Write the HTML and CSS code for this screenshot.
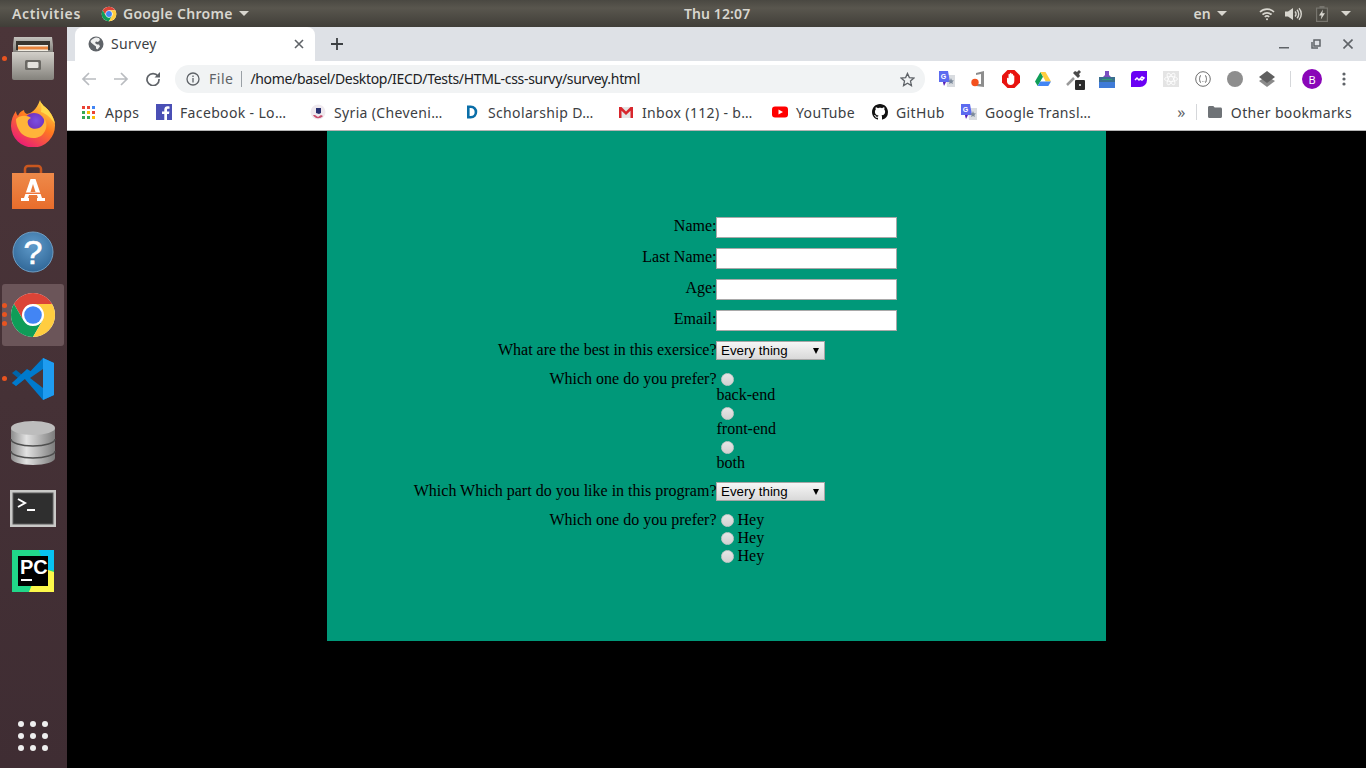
FILE: index.html
```html
<!DOCTYPE html>
<html lang="en">
<head>
  <meta charset="UTF-8" />
  <title>Survey</title>
  <link rel="stylesheet" href="styles.css">
</head>
<body>
  <svg class="defs" width="0" height="0">
    <symbol id="chrome-logo" viewBox="0 0 48 48">
      <circle cx="24" cy="24" r="22" fill="#fff"/>
      <path fill="#db4437" d="M43.05 13A22 22 0 0 0 4.95 13L14.47 29.5A11 11 0 0 1 24 13Z"/>
      <path fill="#0f9d58" d="M4.95 13A22 22 0 0 0 24 46L33.53 29.5A11 11 0 0 1 14.47 29.5Z"/>
      <path fill="#ffcd40" d="M24 46A22 22 0 0 0 43.05 13H24A11 11 0 0 1 33.53 29.5Z"/>
      <circle cx="24" cy="24" r="8.8" fill="#4285f4"/>
    </symbol>
  </svg>

  <header class="topbar">
    <div class="topbar-left">
      <span class="activities">Activities</span>
      <svg class="top-chrome" width="16" height="16"><use href="#chrome-logo"/></svg>
      <span class="app-name">Google Chrome</span>
      <span class="caret"></span>
    </div>
    <div class="clock">Thu 12:07</div>
    <div class="topbar-right">
      <span class="lang">en</span>
      <span class="caret"></span>
      <svg class="tray-wifi" width="16" height="14" viewBox="0 0 16 14" fill="none" stroke="#d8d6cf" stroke-width="1.700">
        <path d="M1 5a10 10 0 0 1 14 0"/>
        <path d="M3.500 7.600a6.500 6.500 0 0 1 9 0"/>
        <path d="M5.800 10a3.200 3.200 0 0 1 4.400 0"/>
        <circle cx="8" cy="12.300" r="1" fill="#d8d6cf" stroke="none"/>
      </svg>
      <svg class="tray-sound" width="17" height="14" viewBox="0 0 17 14" fill="none" stroke="#d8d6cf" stroke-width="1.400">
        <path d="M0 4.500h3L8 1v12L3 9.500H0z" fill="#d8d6cf" stroke="none"/>
        <path d="M10 4.500a3.500 3.500 0 0 1 0 5"/>
        <path d="M12 2.800a6 6 0 0 1 0 8.400"/>
        <path d="M14 1.200a8.500 8.500 0 0 1 0 11.600"/>
      </svg>
      <svg class="tray-battery" width="12" height="16" viewBox="0 0 12 16">
        <path fill="#77756e" d="M3.500 0h5v1.500H12V16H0V1.500h3.500z"/>
        <path fill="#4c4a43" d="M1.200 2.700h9.600v12.100H1.200z"/>
        <path fill="#d8d6cf" d="M7 3.500L3 9.500h2.500L4.800 13.500 9 7.200H6.300z"/>
      </svg>
      <span class="caret caret-last"></span>
    </div>
  </header>

  <div class="desktop">
    <nav class="dock">
      <div class="dock-item">
        <span class="dot dot-mid"></span>
        <svg width="48" height="48" viewBox="0 0 48 48">
          <defs>
            <linearGradient id="cab" x1="0" y1="0" x2="0" y2="1"><stop offset="0" stop-color="#d2cfc9"/><stop offset="1" stop-color="#84827c"/></linearGradient>
            <linearGradient id="cabtop" x1="0" y1="0" x2="0" y2="1"><stop offset="0" stop-color="#c4c2bd"/><stop offset="1" stop-color="#7d7b76"/></linearGradient>
          </defs>
          <path fill="url(#cabtop)" d="M5 2h38l1 8v8H4v-8z"/>
          <path fill="#38352f" d="M7 6h34v9H7z"/>
          <path fill="#f0ece2" d="M9 10h30v6H9z"/>
          <path fill="#e8853d" d="M9 11.500h30v3H9z"/>
          <path fill="url(#cab)" d="M3 17h42v26a2 2 0 0 1-2 2H5a2 2 0 0 1-2-2z"/>
          <rect x="16" y="25" width="16" height="10" rx="1.500" fill="#6a6863"/>
          <rect x="18.500" y="27" width="11" height="6" rx="1" fill="#e4e2dd"/>
        </svg>
      </div>
      <div class="dock-item">
        <svg width="48" height="48" viewBox="0 0 48 48">
          <defs>
            <linearGradient id="fox" x1="0.800" y1="0" x2="0.200" y2="1"><stop offset="0" stop-color="#ffe14a"/><stop offset="0.450" stop-color="#ff7a1f"/><stop offset="1" stop-color="#e8127f"/></linearGradient>
            <radialGradient id="foxball" cx="0.600" cy="0.350" r="0.700"><stop offset="0" stop-color="#7b4fe0"/><stop offset="1" stop-color="#6a1fa8"/></radialGradient>
          </defs>
          <path fill="url(#fox)" d="M31 1c1 5 6 7 9 11 4 5 6 10 6 14a22 22 0 0 1-44 1c0-6 2-11 5-15 0 2 1 4 2 5 1-3 3-5 6-6 0 2 1 3 3 4 4-1 9-3 13-14z"/>
          <circle cx="25" cy="25" r="11" fill="url(#foxball)"/>
          <path fill="#ffb43a" d="M7 20c4-4 11-4 15-1-3 1-4 3-3 6 1 4 6 6 11 4 4-2 6-6 5-10 4 5 3 13-3 18-5 3-13 3-19-2-4-4-6-10-6-15z"/>
          <path fill="#ffd84a" d="M31 1c1 5 6 7 9 11 3 4 5 8 6 13-4-6-8-10-14-12 1-4 0-8-1-12z"/>
        </svg>
      </div>
      <div class="dock-item">
        <svg width="48" height="48" viewBox="0 0 48 48">
          <defs>
            <linearGradient id="bag" x1="0" y1="0" x2="0" y2="1"><stop offset="0" stop-color="#ee8a4a"/><stop offset="1" stop-color="#e86d2c"/></linearGradient>
          </defs>
          <path fill="none" stroke="#c9571f" stroke-width="2.500" d="M16 16V6a3 3 0 0 1 3-3h10a3 3 0 0 1 3 3v10"/>
          <path fill="url(#bag)" d="M3 10h42v36H3z"/>
          <path fill="#fff" d="M21.500 16h5l6.500 19h3v3H28v-3h1l-1-3H20l-1 3h1v3H12v-3h3zM24 21l-2.500 8h5z"/>
          <path fill="#f0763a" d="M16 29.500h16v1.500H16z"/>
        </svg>
      </div>
      <div class="dock-item">
        <svg width="48" height="48" viewBox="0 0 48 48">
          <defs>
            <radialGradient id="help" cx="0.500" cy="0.350" r="0.700"><stop offset="0" stop-color="#5f9bcb"/><stop offset="1" stop-color="#2e6494"/></radialGradient>
          </defs>
          <circle cx="24" cy="25" r="20" fill="url(#help)" stroke="#6f9dc2"/>
          <text x="24" y="37" class="svg-help">?</text>
        </svg>
      </div>
      <div class="dock-item dock-active">
        <span class="dot dot-a"></span><span class="dot dot-b"></span><span class="dot dot-c"></span>
        <svg width="48" height="48"><use href="#chrome-logo"/></svg>
      </div>
      <div class="dock-item">
        <span class="dot dot-mid"></span>
        <svg width="48" height="48" viewBox="0 0 48 48">
          <path fill="#0065a9" d="M3 18l4-3 10 8-10 8-4-3 6-5z"/>
          <path fill="#007acc" d="M34 3L15 23l19 22 11-5V8z"/>
          <path fill="#1f9cf0" d="M34 3l11 5v32l-11 5z"/>
          <path fill="#4a3538" d="M34 14v19l-13-10z"/>
          <path fill="#007acc" d="M3 28l4 3 10-8 6-6-5-3z"/>
        </svg>
      </div>
      <div class="dock-item">
        <svg width="48" height="48" viewBox="0 0 48 48">
          <defs>
            <linearGradient id="db" x1="0" y1="0" x2="1" y2="0"><stop offset="0" stop-color="#8c8c8c"/><stop offset="0.350" stop-color="#e2e2e2"/><stop offset="1" stop-color="#7c7c7c"/></linearGradient>
          </defs>
          <path fill="url(#db)" d="M2 9v30c0 4 10 7 22 7s22-3 22-7V9z"/>
          <ellipse cx="24" cy="9" rx="22" ry="7" fill="#bdbdbd"/>
          <path fill="none" stroke="#4f4f4f" stroke-width="1.500" d="M2 20c0 4 10 7 22 7s22-3 22-7M2 32c0 4 10 7 22 7s22-3 22-7"/>
        </svg>
      </div>
      <div class="dock-item">
        <svg width="48" height="48" viewBox="0 0 48 48">
          <rect x="1" y="7" width="46" height="37" fill="#c9c9c7"/>
          <rect x="4" y="10" width="40" height="31" fill="#2f2f2f" stroke="#5c5c5c"/>
          <path fill="none" stroke="#fff" stroke-width="2" d="M9 16l7 4-7 4"/>
          <path fill="#fff" d="M18 26h8v2h-8z"/>
        </svg>
      </div>
      <div class="dock-item">
        <svg width="48" height="48" viewBox="0 0 48 48">
          <path fill="#21d789" d="M3 3h42v42H3z"/>
          <path fill="#fcf84a" d="M30 20l15 5v20H20z"/>
          <path fill="#07c3f2" d="M30 3h15v20l-9 0z"/>
          <path fill="#000" d="M9 9h30v30H9z"/>
          <text x="11" y="27" class="svg-pc">PC</text>
          <path fill="#fff" d="M12 32h11v2H12z"/>
        </svg>
      </div>
      <div class="dock-item dock-apps">
        <svg width="32" height="32" viewBox="0 0 32 32" fill="#eeeeee">
          <circle cx="4" cy="4" r="3"/><circle cx="16" cy="4" r="3"/><circle cx="28" cy="4" r="3"/>
          <circle cx="4" cy="16" r="3"/><circle cx="16" cy="16" r="3"/><circle cx="28" cy="16" r="3"/>
          <circle cx="4" cy="28" r="3"/><circle cx="16" cy="28" r="3"/><circle cx="28" cy="28" r="3"/>
        </svg>
      </div>
    </nav>

    <div class="browser">
      <div class="tabstrip">
        <div class="tab">
          <svg width="16" height="16" viewBox="0 0 16 16">
            <circle cx="8" cy="8" r="7.500" fill="#5f6368"/>
            <path fill="#fff" d="M8 1.500l3 .5 1 2-2 2-2-.5-1 1.500 2 1.500 2 0 1 2-2.500 3-1.500-1v-2L6 9 3 6.500 2.500 5C4 3 6 2 8 1.500z" opacity="0.900"/>
          </svg>
          <span class="tab-title">Survey</span>
          <svg class="tab-close" width="10" height="10" viewBox="0 0 10 10" stroke="#5f6368" stroke-width="1.600"><path d="M1 1l8 8M9 1l-8 8"/></svg>
        </div>
        <svg class="new-tab" width="12" height="12" viewBox="0 0 12 12" stroke="#3c4043" stroke-width="1.800"><path d="M6 0v12M0 6h12"/></svg>
        <div class="window-btns">
          <svg width="10" height="10" viewBox="0 0 10 10"><path fill="#5f6368" d="M0 8h10v1.500H0z"/></svg>
          <svg width="10" height="10" viewBox="0 0 10 10" fill="none" stroke="#5f6368" stroke-width="1.500"><path d="M3 1h6v6H3z"/><path d="M1 3v6h6" stroke-width="1.500"/></svg>
          <svg width="10" height="10" viewBox="0 0 10 10" stroke="#5f6368" stroke-width="1.600"><path d="M.5.500l9 9M9.500.500l-9 9"/></svg>
        </div>
      </div>

      <div class="toolbar">
        <svg class="nav-back" width="16" height="14" viewBox="0 0 16 14" fill="none" stroke="#b9bcc0" stroke-width="1.700"><path d="M15 7H2M8 1L2 7l6 6"/></svg>
        <svg class="nav-forward" width="16" height="14" viewBox="0 0 16 14" fill="none" stroke="#b9bcc0" stroke-width="1.700"><path d="M1 7h13M8 1l6 6-6 6"/></svg>
        <svg class="nav-reload" width="14" height="14" viewBox="0 0 14 14" fill="none" stroke="#5f6368" stroke-width="1.700"><path d="M12 4.200A6 6 0 1 0 13 7"/><path fill="#5f6368" stroke="none" d="M14 0v5.500H8.500z"/></svg>
        <div class="omnibox">
          <svg width="14" height="14" viewBox="0 0 14 14" fill="none" stroke="#5f6368" stroke-width="1.300"><circle cx="7" cy="7" r="6"/><path d="M7 6v4.500M7 3.500v1.500"/></svg>
          <span class="omni-file">File</span>
          <span class="omni-sep"></span>
          <span class="omni-url">/home/basel/Desktop/IECD/Tests/HTML-css-survy/survey.html</span>
          <svg class="omni-star" width="15" height="15" viewBox="0 0 16 16" fill="none" stroke="#5f6368" stroke-width="1.400"><path d="M8 1.500l2 4.500 4.800.5-3.600 3.200 1 4.800L8 12l-4.200 2.500 1-4.800L1.200 6.500 6 6z"/></svg>
        </div>
        <div class="extensions">
          <span class="ext">
            <svg width="16" height="16" viewBox="0 0 16 16">
              <path fill="#d9dce0" d="M7 4h9v12H8z"/>
              <path fill="#5c6bf0" d="M0 0h9l2 11H6l-1 3-1-3H0z"/>
              <path fill="#5b21b6" d="M4 11h3l-2 4z"/>
              <text x="4.600" y="8" class="svg-g">G</text>
              <path fill="#7c8a9c" d="M12 7l.9 2.200 2.100.2-1.600 1.500.5 2.200-1.900-1.200-1.900 1.200.5-2.200L9 9.400l2.100-.2z"/>
            </svg>
          </span>
          <span class="ext">
            <svg width="16" height="16" viewBox="0 0 16 16">
              <path fill="#8d8d8d" d="M5 2l8-2v16l-8-1v-2h5V3L5 4z"/>
              <circle cx="4" cy="11.500" r="3.700" fill="#f4511e"/>
            </svg>
          </span>
          <span class="ext">
            <svg width="18" height="18" viewBox="0 0 18 18">
              <path fill="#e8130f" d="M5.500 0h7L18 5.500v7L12.500 18h-7L0 12.500v-7z"/>
              <path fill="#fff" d="M5 8.500c0-1 1.300-1 1.500 0V4.500c0-1 1.300-1 1.500 0V3.500c0-1 1.500-1 1.500 0v1c0-1 1.500-1 1.500 0v1.500c0-1 1.300-1 1.300 0V11c0 2.500-1.500 4-3.800 4-2 0-3-1-3.500-3z"/>
            </svg>
          </span>
          <span class="ext">
            <svg width="16" height="15" viewBox="0 0 16 15">
              <path fill="#0f9d58" d="M5.500 0L0 9.500 2.700 14 8 4.800z"/>
              <path fill="#ffcd40" d="M5.500 0h5L16 9.500h-5.300z"/>
              <path fill="#4285f4" d="M2.700 14H13.300L16 9.500H5.300z"/>
            </svg>
          </span>
          <span class="ext ext-dropper">
            <svg width="20" height="22" viewBox="0 0 20 22">
              <path fill="none" stroke="#9a9a9a" stroke-width="2.500" d="M2 17l7-7"/>
              <path fill="#4a4a4a" d="M8 5l2-2 2 1 2-2 2 2-2 2 1 2-2 2z"/>
              <rect x="10" y="12" width="10" height="10" rx="1" fill="#2b2b2b"/>
              <circle cx="15" cy="17" r="1" fill="#fff"/>
            </svg>
          </span>
          <span class="ext">
            <svg width="16" height="17" viewBox="0 0 16 17">
              <path fill="#7a4fc0" d="M6 0h4v4l2 2H4l2-2z"/>
              <path fill="#3a6f8f" d="M0 6h16v5H0z"/>
              <path fill="#2f9e77" d="M3 8h10v1H3z"/>
              <path fill="#3f7bd8" d="M0 11h16v6H0z"/>
            </svg>
          </span>
          <span class="ext">
            <svg width="16" height="16" viewBox="0 0 16 16">
              <path fill="#6a00f4" d="M4 0h12v9a7 7 0 0 1-7 7H0V4a4 4 0 0 1 4-4z"/>
              <path fill="none" stroke="#fff" stroke-width="1.500" d="M4 9l2-2 2 2 3-3 2 1-2 2-2-1"/>
            </svg>
          </span>
          <span class="ext">
            <svg width="16" height="16" viewBox="0 0 16 16" fill="none" stroke="#fff" stroke-width="0.800">
              <rect width="16" height="16" fill="#e4e4e4" stroke="none"/>
              <ellipse cx="8" cy="8" rx="6.500" ry="2.500"/>
              <ellipse cx="8" cy="8" rx="6.500" ry="2.500" transform="rotate(60 8 8)"/>
              <ellipse cx="8" cy="8" rx="6.500" ry="2.500" transform="rotate(120 8 8)"/>
            </svg>
          </span>
          <span class="ext">
            <svg width="16" height="16" viewBox="0 0 16 16" fill="none" stroke="#6d6d6d" stroke-width="1">
              <circle cx="8" cy="8" r="7.300"/>
              <path d="M6 4.500c-2 0-.5 3.500-2 3.500 1.500 0 0 3.500 2 3.500M10 4.500c2 0 .5 3.500 2 3.500-1.500 0 0 3.500-2 3.500M7 10.500h.5M8.700 10.500h.5"/>
            </svg>
          </span>
          <span class="ext"><span class="ext-ball"></span></span>
          <span class="ext">
            <svg width="16" height="16" viewBox="0 0 16 16">
              <path fill="#8a8a8a" d="M8 5l8 5-8 6-8-6z"/>
              <path fill="#5f5f5f" d="M8 0l8 6-8 6-8-6z"/>
            </svg>
          </span>
        </div>
        <span class="tool-sep"></span>
        <span class="avatar">B</span>
        <svg class="menu-dots" width="4" height="14" viewBox="0 0 4 14" fill="#5f6368"><circle cx="2" cy="2" r="1.600"/><circle cx="2" cy="7" r="1.600"/><circle cx="2" cy="12" r="1.600"/></svg>
      </div>

      <div class="bookmarks">
        <span class="bm bm-apps">
          <svg class="apps-icon" width="13" height="13" viewBox="0 0 13 13">
            <rect width="3" height="3" fill="#ea4335"/><rect x="5" width="3" height="3" fill="#ea4335"/><rect x="10" width="3" height="3" fill="#4285f4"/>
            <rect y="5" width="3" height="3" fill="#34a853"/><rect x="5" y="5" width="3" height="3" fill="#fbbc05"/><rect x="10" y="5" width="3" height="3" fill="#ea4335"/>
            <rect y="10" width="3" height="3" fill="#34a853"/><rect x="5" y="10" width="3" height="3" fill="#34a853"/><rect x="10" y="10" width="3" height="3" fill="#fbbc05"/>
          </svg>
          Apps
        </span>
        <span class="bm bm-wide">
          <svg width="16" height="16" viewBox="0 0 16 16"><rect width="16" height="16" fill="#4a4fb5"/><path fill="#fff" d="M11 16V10h2l.4-2.500H11V6c0-.8.300-1.200 1.200-1.200h1.300V2.500c-.6-.1-1.300-.2-2-.2C9.600 2.300 8.300 3.500 8.300 5.600v1.900H6V10h2.300v6z"/></svg>
          Facebook - Lo…
        </span>
        <span class="bm bm-wide">
          <svg width="16" height="16" viewBox="0 0 16 16"><circle cx="8" cy="8" r="7.500" fill="#efe9ee"/><path fill="#c9506f" d="M3 11a6 6 0 0 0 10 1l-2-1-3 2-3-2z"/><path fill="#27306e" d="M6 4h5v5l-2 1-3-1z"/></svg>
          Syria (Cheveni…
        </span>
        <span class="bm bm-wide">
          <svg width="16" height="16" viewBox="0 0 16 16"><path fill="none" stroke="#0a6ea8" stroke-width="2.600" d="M4.300 2.800v10.400h2.400c7 0 7-10.400 0-10.400z"/></svg>
          Scholarship D…
        </span>
        <span class="bm bm-wide">
          <svg width="16" height="16" viewBox="0 0 16 16"><path fill="#e4e4e4" d="M1 3h14v11H1z"/><path fill="#d8262c" d="M1 3h2.500L8 7.500 12.500 3H15v11h-2.500V6.800L8 11 3.500 6.800V14H1z"/></svg>
          Inbox (112) - b…
        </span>
        <span class="bm bm-yt">
          <svg width="16" height="16" viewBox="0 0 16 16"><rect y="2.500" width="16" height="11" rx="3" fill="#ff0000"/><path fill="#fff" d="M6.500 5.500L11 8l-4.500 2.500z"/></svg>
          YouTube
        </span>
        <span class="bm bm-gh">
          <svg width="16" height="16" viewBox="0 0 16 16"><path fill="#111" d="M8 0C3.580 0 0 3.580 0 8c0 3.540 2.290 6.530 5.470 7.590.4.070.55-.17.55-.38 0-.19-.01-.82-.01-1.490-2.010.37-2.530-.49-2.690-.94-.09-.23-.48-.94-.82-1.130-.28-.15-.68-.52-.01-.53.63-.01 1.080.58 1.230.82.72 1.210 1.870.87 2.330.66.070-.52.280-.87.510-1.070-1.780-.2-3.640-.89-3.640-3.950 0-.87.310-1.590.82-2.150-.08-.2-.36-1.020.08-2.120 0 0 .67-.21 2.200.82.640-.18 1.320-.27 2-.27s1.360.09 2 .27c1.530-1.040 2.200-.82 2.200-.82.44 1.100.16 1.920.08 2.120.51.56.82 1.270.82 2.150 0 3.070-1.870 3.750-3.650 3.950.29.25.54.73.54 1.480 0 1.070-.01 1.930-.01 2.200 0 .21.150.46.550.38A8.013 8.013 0 0 0 16 8c0-4.420-3.580-8-8-8z"/></svg>
          GitHub
        </span>
        <span class="bm bm-wide">
          <svg width="16" height="16" viewBox="0 0 16 16">
            <path fill="#d9dce0" d="M7 4h9v12H8z"/>
            <path fill="#5c6bf0" d="M0 0h9l2 11H6l-1 3-1-3H0z"/>
            <path fill="#5b21b6" d="M4 11h3l-2 4z"/>
            <text x="4.600" y="8" class="svg-g">G</text>
            <path fill="#7c8a9c" d="M12 7l.9 2.200 2.100.2-1.600 1.500.5 2.200-1.900-1.200-1.900 1.200.5-2.200L9 9.400l2.100-.2z"/>
          </svg>
          Google Transl…
        </span>
        <span class="bm-more">»</span>
        <span class="bm-sep"></span>
        <span class="bm bm-other">
          <svg width="14" height="12" viewBox="0 0 14 12"><path fill="#6f7377" d="M0 1.500C0 .7.600 0 1.400 0h3.900l1.400 1.500h5.900c.8 0 1.400.7 1.400 1.500v7.500c0 .8-.6 1.500-1.400 1.500H1.400C.6 12 0 11.300 0 10.500z"/></svg>
          Other bookmarks
        </span>
      </div>

      <main class="page">
        <form class="survey">
          <label class="q">Name:</label>
          <div><input type="text" class="field"></div>

          <label class="q">Last Name:</label>
          <div><input type="text" class="field"></div>

          <label class="q">Age:</label>
          <div><input type="text" class="field"></div>

          <label class="q">Email:</label>
          <div><input type="email" class="field"></div>

          <label class="q">What are the best in this exersice?</label>
          <div><span class="select-wrap"><select class="pick"><option>Every thing</option></select></span></div>

          <label class="q">Which one do you prefer?</label>
          <div>
            <input type="radio" name="side" class="radio">
            <label class="choice">back-end</label>
            <input type="radio" name="side" class="radio">
            <label class="choice">front-end</label>
            <input type="radio" name="side" class="radio">
            <label class="choice">both</label>
          </div>

          <label class="q">Which Which part do you like in this program?</label>
          <div><span class="select-wrap"><select class="pick"><option>Every thing</option></select></span></div>

          <label class="q">Which one do you prefer?</label>
          <div>
            <div class="hey"><input type="radio" name="hey" class="radio"><label>Hey</label></div>
            <div class="hey"><input type="radio" name="hey" class="radio"><label>Hey</label></div>
            <div class="hey"><input type="radio" name="hey" class="radio"><label>Hey</label></div>
          </div>
        </form>
      </main>
    </div>
  </div>
</body>
</html>
```

FILE: styles.css
```css
* {
  box-sizing: border-box;
}
html, body {
  margin: 0;
  height: 768px;
  overflow: hidden;
}
body {
  background: #000;
  font-family: "Noto Sans", sans-serif;
}
.defs {
  position: absolute;
}
.svg-g {
  font: bold 7px "Liberation Sans", sans-serif;
  fill: #fff;
  text-anchor: middle;
}
.svg-help {
  font: 34px "Liberation Sans", sans-serif;
  stroke: #fff;
  stroke-width: 0.6px;
  fill: #fff;
  text-anchor: middle;
}
.svg-pc {
  font: bold 20px "Liberation Sans", sans-serif;
  fill: #fff;
}

/* top bar */
.topbar {
  height: 27px;
  display: flex;
  align-items: center;
  justify-content: space-between;
  position: relative;
  background: linear-gradient(#4a4842, #59564e 30%, #403e38);
  color: #d8d6cf;
  font-size: 14px;
  font-weight: 600;
}
.topbar-left, .topbar-right {
  display: flex;
  align-items: center;
}
.activities {
  margin-left: 12px;
  letter-spacing: 0.65px;
}
.top-chrome {
  margin-left: 20px;
}
.app-name {
  margin-left: 6px;
  letter-spacing: 0.3px;
}
.caret {
  display: inline-block;
  margin-left: 6px;
  border-left: 5px solid transparent;
  border-right: 5px solid transparent;
  border-top: 5px solid #d8d6cf;
}
.clock {
  position: absolute;
  left: 684px;
  letter-spacing: 0.1px;
}
.lang {
  letter-spacing: 0.2px;
}
.tray-wifi {
  margin-left: 32px;
}
.tray-sound {
  margin-left: 10px;
}
.tray-battery {
  margin-left: 14px;
}
.caret-last {
  margin-left: 13px;
  margin-right: 15px;
}

.desktop {
  display: flex;
  height: 741px;
}

/* dock */
.dock {
  width: 67px;
  flex: none;
  display: flex;
  flex-direction: column;
  background: linear-gradient(#4b3539, #3f2d33);
}
.dock-item {
  height: 64px;
  flex: none;
  display: flex;
  align-items: center;
  justify-content: center;
  padding-right: 1px;
  position: relative;
}
.dock-active::before {
  content: "";
  position: absolute;
  left: 2px;
  right: 3px;
  top: 1px;
  bottom: 1px;
  background: #6b5559;
  border-radius: 3px;
}
.dock-item svg {
  position: relative;
}
.dock-apps {
  margin-top: auto;
}
.dot {
  position: absolute;
  left: 2px;
  width: 5px;
  height: 5px;
  border-radius: 50%;
  background: #e95420;
  z-index: 1;
}
.dot-mid, .dot-b {
  top: 29px;
}
.dot-a {
  top: 20px;
}
.dot-c {
  top: 38px;
}

/* browser */
.browser {
  flex: 1;
  min-width: 0;
  display: flex;
  flex-direction: column;
}
.tabstrip {
  height: 34px;
  flex: none;
  display: flex;
  align-items: center;
  background: #dee1e6;
  padding-left: 8px;
}
.tab {
  width: 240px;
  height: 34px;
  background: #fff;
  border-radius: 8px 8px 0 0;
  display: flex;
  align-items: center;
  padding-left: 13px;
  font-size: 14px;
  color: #3c4043;
}
.tab-title {
  margin-left: 7px;
  margin-bottom: 2px;
  letter-spacing: 0.3px;
}
.tab-close {
  margin-left: auto;
  margin-right: 11px;
}
.new-tab {
  margin-left: 16px;
}
.window-btns {
  margin-left: auto;
  display: flex;
  gap: 22px;
  padding-right: 13px;
}
.toolbar {
  height: 36px;
  flex: none;
  display: flex;
  align-items: center;
  background: #fff;
  padding-left: 14px;
}
.nav-forward {
  margin-left: 16px;
}
.nav-reload {
  margin-left: 17px;
}
.omnibox {
  width: 750px;
  height: 28px;
  margin-left: 15px;
  border-radius: 14px;
  background: #f1f3f4;
  display: flex;
  align-items: center;
  padding: 0 10px 0 11px;
  font-size: 14px;
}
.omni-file {
  margin-left: 9px;
  margin-bottom: 2px;
  color: #5f6368;
  letter-spacing: 0.5px;
}
.omni-sep {
  width: 1px;
  height: 16px;
  background: #9aa0a6;
  margin: 0 8px;
}
.omni-url {
  margin-bottom: 2px;
  color: #202124;
  letter-spacing: -0.32px;
}
.omni-star {
  margin-left: auto;
}
.extensions {
  display: flex;
  margin-left: 6px;
}
.ext {
  width: 32px;
  height: 28px;
  display: flex;
  align-items: center;
  justify-content: center;
}
.ext-ball {
  width: 16px;
  height: 16px;
  border-radius: 50%;
  background: #8e8e8e;
}
.tool-sep {
  width: 1px;
  height: 16px;
  background: #d5d7da;
  margin-left: 7px;
}
.avatar {
  width: 20px;
  height: 20px;
  margin-left: 11px;
  border-radius: 50%;
  background: #8a06b8;
  color: #fff;
  font-size: 11px;
  display: flex;
  align-items: center;
  justify-content: center;
}
.menu-dots {
  margin-left: 20px;
}

/* bookmarks */
.bookmarks {
  height: 34px;
  flex: none;
  display: flex;
  align-items: center;
  background: #fff;
  border-bottom: 1px solid #b5b5b5;
  padding: 0 14px 3px 15px;
  font-size: 14px;
  letter-spacing: 0.35px;
  color: #3c4043;
}
.bm {
  display: flex;
  align-items: center;
  gap: 8px;
  white-space: nowrap;
}
.bm-apps {
  width: 74px;
  gap: 10px;
}
.bm-wide {
  width: 154px;
}
.bm-yt {
  width: 100px;
}
.bm-gh {
  width: 89px;
}
.bm-more {
  margin-left: auto;
  font-size: 16px;
  color: #5f6368;
}
.bm-sep {
  width: 1px;
  height: 16px;
  background: #d5d7da;
  margin-left: 10px;
}
.bm-other {
  margin-left: 11px;
  gap: 9px;
}

/* the page itself */
.page {
  flex: 1;
  background: #000;
}
.survey {
  width: 779px;
  height: 510px;
  margin: 0 auto;
  background: #009879;
  padding-top: 86px;
  display: grid;
  grid-template-columns: 389px 1fr;
  grid-auto-rows: min-content;
  row-gap: 10px;
  font-family: "Liberation Serif", serif;
  font-size: 16px;
  line-height: 18px;
  color: #000;
}
.q {
  margin-right: -0.5px;
  text-align: right;
  white-space: nowrap;
}
.field {
  display: block;
  width: 181px;
  height: 21px;
  border: 1px solid #a9a9a9;
  background: #fff;
  padding: 1px 2px;
}
.select-wrap {
  display: block;
  width: 109px;
  height: 19px;
  position: relative;
}
.select-wrap::after {
  content: "";
  position: absolute;
  right: 6px;
  top: 7px;
  border-left: 3.5px solid transparent;
  border-right: 3.5px solid transparent;
  border-top: 6px solid #000;
}
.pick {
  appearance: none;
  display: block;
  width: 100%;
  height: 100%;
  border: 1px solid #a6a6a6;
  border-radius: 0;
  background: linear-gradient(#f6f6f6, #d9d9d9);
  padding: 0 4px;
  font: 13.333px "Liberation Sans", sans-serif;
  color: #000;
}
.radio {
  appearance: none;
  display: block;
  flex: none;
  width: 13px;
  height: 13px;
  margin: 3px 3px 0 5px;
  border-radius: 50%;
  border: 1px solid #c9c9c9;
  background: linear-gradient(#e6e6e6, #d2d2d2);
}
.choice {
  display: block;
  margin-left: 0.5px;
}
.hey {
  display: flex;
}
.hey label {
  margin-left: 0.5px;
}
```
